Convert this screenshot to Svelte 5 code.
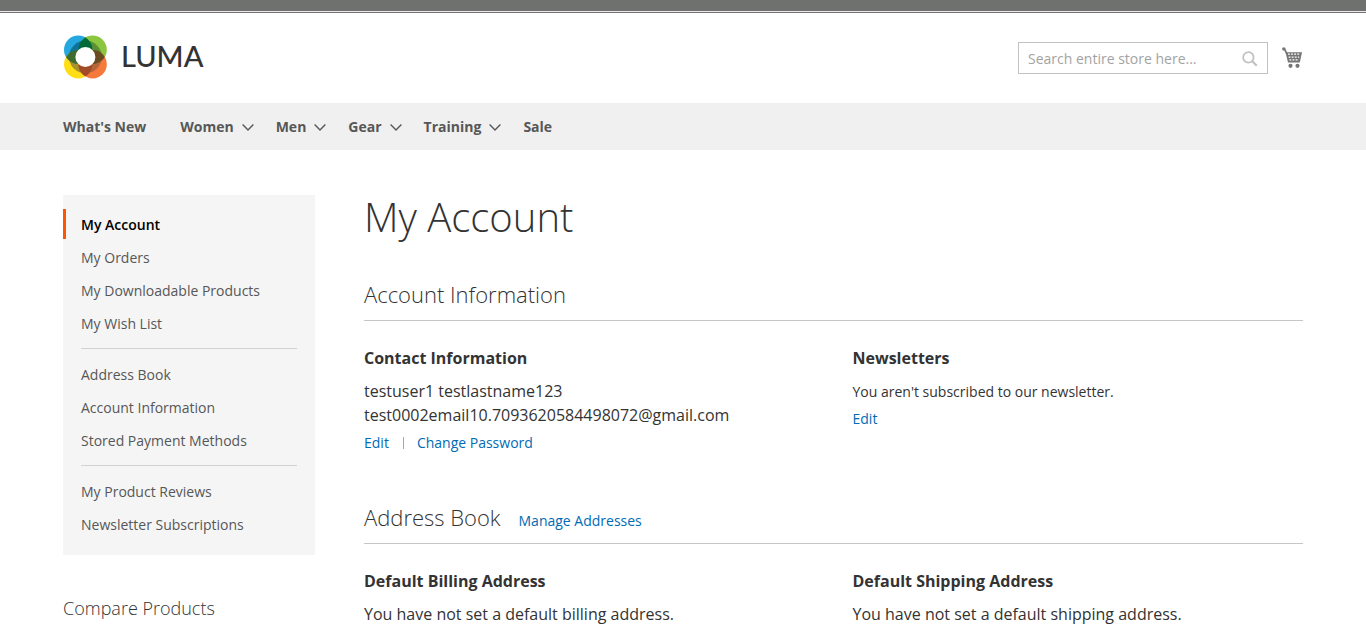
<script>
  const nav = [
    { label: "What's New", menu: false },
    { label: 'Women', menu: true },
    { label: 'Men', menu: true },
    { label: 'Gear', menu: true },
    { label: 'Training', menu: true },
    { label: 'Sale', menu: false }
  ];
  const groups = [
    ['My Account', 'My Orders', 'My Downloadable Products', 'My Wish List'],
    ['Address Book', 'Account Information', 'Stored Payment Methods'],
    ['My Product Reviews', 'Newsletter Subscriptions']
  ];
  let query = $state('');
</script>

<div class="panel"></div>
<header class="wrap header">
  <a class="logo" href="#home" aria-label="Luma">
    <svg width="46" height="44" viewBox="-.6 -.2 46 44" aria-hidden="true">
      <defs>
        <clipPath id="nw"><circle cx="14.6" cy="14.6" r="14.2" /></clipPath>
        <clipPath id="se"><circle cx="29" cy="29" r="14.2" /></clipPath>
      </defs>
      <circle cx="14.6" cy="14.6" r="14.2" fill="#26a8df" />
      <circle cx="29" cy="14.6" r="14.2" fill="#8cc63f" />
      <circle cx="14.6" cy="29" r="14.2" fill="#ffde17" />
      <circle cx="29" cy="29" r="14.2" fill="#f4793b" />
      <path d="M21.8 21.8V5.4A16.4 16.4 0 0 0 5.4 21.8z" fill="#0f7399" />
      <path d="M21.8 21.8V5.4A16.4 16.4 0 0 1 38.2 21.8z" fill="#5a8f35" />
      <path d="M21.8 21.8V38.2A16.4 16.4 0 0 1 5.4 21.8z" fill="#a9922e" />
      <path d="M21.8 21.8V38.2A16.4 16.4 0 0 0 38.2 21.8z" fill="#b5653a" />
      <circle cx="29" cy="14.6" r="14.2" fill="#006b38" clip-path="url(#nw)" />
      <circle cx="14.6" cy="29" r="14.2" fill="#3d6b30" clip-path="url(#nw)" />
      <circle cx="29" cy="14.6" r="14.2" fill="#6a4a20" clip-path="url(#se)" />
      <circle cx="14.6" cy="29" r="14.2" fill="#a34b24" clip-path="url(#se)" />
      <circle cx="21.8" cy="21.8" r="10" fill="#fff" />
    </svg>
    <span>LUMA</span>
  </a>
  <div class="tools">
    <form class="search" onsubmit={(e) => e.preventDefault()}>
      <input type="text" aria-label="Search" placeholder="Search entire store here..." bind:value={query} />
      <button type="submit" aria-label="Search">
        <svg width="16" height="16" viewBox="0 0 16 16" fill="none" stroke="#c2c2c2">
          <circle cx="6.4" cy="6.4" r="5.2" stroke-width="1.8" />
          <path d="M10 10l4.8 4.8" stroke-width="2.3" />
        </svg>
      </button>
    </form>
    <a class="cart" href="#cart" aria-label="My Cart">
      <svg width="21" height="22" viewBox="0 0 21 22" fill="#757575">
        <circle cx="1.8" cy="1.9" r="1.7" />
        <path d="M1.3 1.2l1.6-.3 2.2 4.3H20l-2.2 10.3H6L4 7.2z" />
        <path d="M6 7.2h11.8M6.6 10.1h10.6M7.4 12.9h9.4" stroke="#fff" stroke-width="1.3" stroke-dasharray="1.9 1.2" fill="none" />
        <circle cx="8.5" cy="18.8" r="2.1" /><circle cx="15.5" cy="18.8" r="2.1" />
      </svg>
    </a>
  </div>
</header>

<nav class="topnav" aria-label="Store">
  <ul class="wrap">
    {#each nav as item}
      <li>
        <a href="#store" class:menu={item.menu}>
          {item.label}
          {#if item.menu}
            <svg width="12" height="8" viewBox="0 0 12 8" fill="none" stroke="#575757" stroke-width="1.4"><path d="M.6 1.5L6 6.9 11.4 1.5" /></svg>
          {/if}
        </a>
      </li>
    {/each}
  </ul>
</nav>

<div class="wrap page">
  <aside>
    <nav class="account" aria-label="Account">
      {#each groups as group}
        <ul>
          {#each group as label}
            <li><a href="#account" class:current={label === 'My Account'}>{label}</a></li>
          {/each}
        </ul>
      {/each}
    </nav>
    <h3>Compare Products</h3>
  </aside>

  <main>
    <h1>My Account</h1>
    <section>
      <div class="title"><h2>Account Information</h2></div>
      <div class="cols">
        <div>
          <h4>Contact Information</h4>
          <p>testuser1 testlastname123<br />test0002email10.7093620584498072@gmail.com</p>
          <div class="actions"><a href="#edit">Edit</a><i></i><a href="#password">Change Password</a></div>
        </div>
        <div>
          <h4>Newsletters</h4>
          <p class="small">You aren't subscribed to our newsletter.</p>
          <div class="actions"><a href="#newsletter">Edit</a></div>
        </div>
      </div>
    </section>
    <section>
      <div class="title"><h2>Address Book</h2><a href="#addresses">Manage Addresses</a></div>
      <div class="cols">
        <div>
          <h4>Default Billing Address</h4>
          <p>You have not set a default billing address.</p>
        </div>
        <div>
          <h4>Default Shipping Address</h4>
          <p>You have not set a default shipping address.</p>
        </div>
      </div>
    </section>
  </main>
</div>

<style>
  :global(html) { overflow: hidden; }
  :global(body) {
    margin: 0;
    height: 100vh;
    overflow: hidden;
    background: #fff;
    color: #333;
    font: 14px/20px 'Open Sans', sans-serif;
  }
  ul, h1, h2, h3, h4, p { margin: 0; padding: 0; list-style: none; }
  a { color: #006bb4; text-decoration: none; }
  svg { display: block; }
  .wrap { box-sizing: border-box; max-width: 1280px; margin: 0 auto; padding: 0 20px; }
  .panel { height: 11px; background: #6e716e; border-bottom: 1px solid #eee8ee; }
  .header {
    position: relative;
    display: flex;
    justify-content: space-between;
    align-items: flex-start;
    height: 91px;
    padding-top: 22px;
  }
  .header::before {
    content: '';
    position: absolute;
    top: 0;
    left: 50%;
    width: 100vw;
    height: 1px;
    background: #727272;
    transform: translateX(-50%);
  }
  .logo { display: flex; align-items: center; gap: 12px; padding-top: 1px; color: #333; font: 500 29px/42px Lato, sans-serif; }
  .logo span { padding-bottom: 2px; }
  .tools { display: flex; align-items: flex-start; gap: 14px; padding-top: 8px; }
  .search {
    box-sizing: border-box;
    display: flex;
    align-items: center;
    width: 250px;
    height: 32px;
    border: 1px solid #c2c2c2;
  }
  input {
    flex: 1;
    min-width: 0;
    padding: 2px 0 0 9px;
    border: 0;
    outline: 0;
    background: none;
    color: #333;
    font: 14px/20px 'Open Sans', sans-serif;
  }
  input::placeholder { color: #a3a3a3; opacity: 1; }
  button { padding: 2px 9px 0; border: 0; background: none; cursor: pointer; }
  .cart { padding-top: 5px; }
  .topnav { background: #f0f0f0; }
  .topnav ul { display: flex; gap: 34px; }
  .topnav a { display: flex; align-items: center; gap: 8px; color: #575757; font-weight: 700; line-height: 47px; }
  .topnav a.menu { margin-right: -12px; }
  .page { display: grid; grid-template-columns: 252px minmax(0, 1fr); gap: 49px; padding-top: 45px; }
  .account { padding: 14px 0 16px; background: #f5f5f5; }
  .account ul { display: grid; gap: 3px; }
  .account ul + ul::before { content: ''; height: 1px; margin: 10px 18px 7px; background: #d1d1d1; }
  .account a { display: block; padding: 6px 15px 4px; border-left: 3px solid transparent; color: #575757; }
  .account a.current { border-color: #ff5501; color: #000; font-weight: 600; }
  h3 { margin-top: 41px; font-size: 18px; line-height: 24px; font-weight: 300; }
  h1 { font-size: 40px; line-height: 44px; font-weight: 300; }
  h2 { font-size: 22px; line-height: 24px; font-weight: 300; }
  h4 { margin-bottom: 10px; font-size: 16px; line-height: 22px; font-weight: 700; }
  section { margin-top: 43px; }
  section + section { margin-top: 52px; }
  .title { display: flex; align-items: baseline; gap: 18px; padding-bottom: 14px; border-bottom: 1px solid #c6c6c6; }
  .title a { line-height: 16px; }
  .cols { display: grid; grid-template-columns: 1fr 1fr; gap: 38px; padding-top: 26px; }
  p { font-size: 16px; line-height: 24px; }
  p.small { padding-top: 1px; font-size: 14px; line-height: 23px; }
  .actions { display: flex; align-items: center; gap: 14px; margin-top: 6px; }
  .actions i { width: 1px; height: 12px; margin-right: -1px; background: #a6a6a6; }
</style>
